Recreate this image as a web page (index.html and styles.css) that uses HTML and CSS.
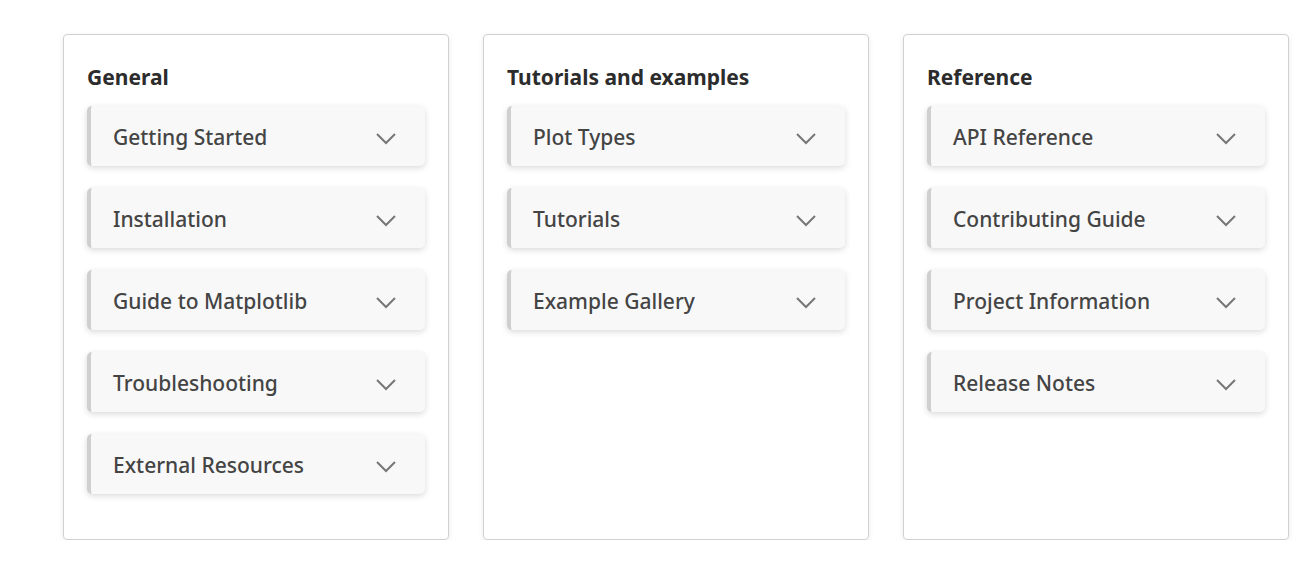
FILE: index.html
```html
<!DOCTYPE html>
<html lang="en">
<head>
    <meta charset="UTF-8">
    <meta name="viewport" content="width=device-width, initial-scale=1.0">
    <title>Matplotlib documentation</title>
    <link rel="stylesheet" href="styles.css">
</head>
<body>

<main class="cards">
    <!-- General -->
    <section class="card">
        <h3>General</h3>
        <div class="item">Getting Started <svg class="chev" viewBox="0 0 20 12"><polyline points="1,1 10,10 19,1"/></svg></div>
        <div class="item">Installation <svg class="chev" viewBox="0 0 20 12"><polyline points="1,1 10,10 19,1"/></svg></div>
        <div class="item">Guide to Matplotlib <svg class="chev" viewBox="0 0 20 12"><polyline points="1,1 10,10 19,1"/></svg></div>
        <div class="item">Troubleshooting <svg class="chev" viewBox="0 0 20 12"><polyline points="1,1 10,10 19,1"/></svg></div>
        <div class="item">External Resources <svg class="chev" viewBox="0 0 20 12"><polyline points="1,1 10,10 19,1"/></svg></div>
    </section>

    <!-- Tutorials -->
    <section class="card">
        <h3>Tutorials and examples</h3>
        <div class="item">Plot Types <svg class="chev" viewBox="0 0 20 12"><polyline points="1,1 10,10 19,1"/></svg></div>
        <div class="item">Tutorials <svg class="chev" viewBox="0 0 20 12"><polyline points="1,1 10,10 19,1"/></svg></div>
        <div class="item">Example Gallery <svg class="chev" viewBox="0 0 20 12"><polyline points="1,1 10,10 19,1"/></svg></div>
    </section>

    <!-- Reference -->
    <section class="card">
        <h3>Reference</h3>
        <div class="item">API Reference <svg class="chev" viewBox="0 0 20 12"><polyline points="1,1 10,10 19,1"/></svg></div>
        <div class="item">Contributing Guide <svg class="chev" viewBox="0 0 20 12"><polyline points="1,1 10,10 19,1"/></svg></div>
        <div class="item">Project Information <svg class="chev" viewBox="0 0 20 12"><polyline points="1,1 10,10 19,1"/></svg></div>
        <div class="item">Release Notes <svg class="chev" viewBox="0 0 20 12"><polyline points="1,1 10,10 19,1"/></svg></div>
    </section>
</main>

</body>
</html>
```

FILE: styles.css
```css
/* Estilos generales */
body {
    font-family: "Noto Sans", sans-serif;
    margin: 0;
    padding: 0;
    background-color: #fff;
    color: #333;
}

.cards {
    display: grid;
    grid-template-columns: repeat(3, 386px);
    gap: 34px;
    padding: 34px 0 0 63px;
}

.card {
    height: 506px;
    box-sizing: border-box;
    border: 1px solid #d0d0d0;
    border-radius: 4px;
    box-shadow: 0 2px 6px rgba(0, 0, 0, 0.08);
    padding: 27px 23px 0;
    display: flex;
    flex-direction: column;
    gap: 22px;
}

.card h3 {
    margin: 0 0 -8px;
    font-size: 21px;
    line-height: 30px;
    font-weight: 700;
    color: #2c2c2c;
}

.item {
    height: 60px;
    box-sizing: border-box;
    display: flex;
    align-items: center;
    justify-content: space-between;
    padding: 1px 29px 0 22px;
    background-color: #f8f8f8;
    border-left: 4px solid #cfcfcf;
    border-radius: 5px;
    box-shadow: 0 2px 6px rgba(0, 0, 0, 0.15);
    font-size: 21px;
    font-weight: 500;
    color: #444;
}

.chev {
    width: 20px;
    height: 12px;
    margin-top: 4px;
    fill: none;
    stroke: #777;
    stroke-width: 2;
}
```
